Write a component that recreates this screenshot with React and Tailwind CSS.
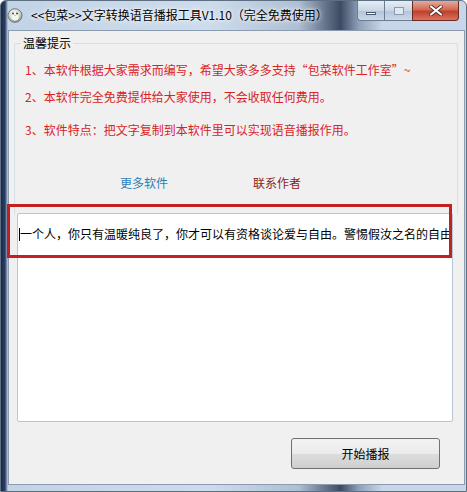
import React from 'react';

const FONT = { fontFamily: '"Noto Sans CJK SC", "Liberation Sans", sans-serif' };

function TitleIcon() {
    return (
        <svg width="16" height="16" viewBox="0 0 16 16" className="flex-shrink-0">
            <defs>
                <radialGradient id="ig" cx="0.45" cy="0.35" r="0.7">
                    <stop offset="0" stopColor="#ffffff" />
                    <stop offset="0.6" stopColor="#c9d2c8" />
                    <stop offset="1" stopColor="#6f7d72" />
                </radialGradient>
            </defs>
            <ellipse cx="8" cy="8.5" rx="7" ry="6.8" fill="url(#ig)" stroke="#5c6a60" strokeWidth="0.8" />
            <ellipse cx="8" cy="10" rx="3.6" ry="3.4" fill="#f4f6f0" />
            <circle cx="6" cy="6.5" r="0.9" fill="#333" />
            <circle cx="10" cy="6.5" r="0.9" fill="#333" />
            <path d="M7 8 L9 8 L8 9.2 Z" fill="#d9a13a" />
        </svg>
    );
}

function WindowButtons() {
    return (
        <div className="flex self-start h-[20px]">
            <div className="w-[27px] h-full rounded-bl-[4px] border border-r-0 border-t-0 border-[#6c7c93] flex items-center justify-center"
                style={{ background: 'linear-gradient(#e6eef7, #c9d6e5 50%, #b3c4d8 51%, #cbd8e8)' }}>
                <div className="w-[10px] h-[3px] bg-white border border-[#4a5a70] mt-[5px]" />
            </div>
            <div className="w-[28px] h-full border border-r-0 border-t-0 border-[#6c7c93] flex items-center justify-center"
                style={{ background: 'linear-gradient(#e6eef7, #c9d6e5 50%, #b3c4d8 51%, #cbd8e8)' }}>
                <div className="w-[10px] h-[8px] border border-[#8b9bb0] bg-[#dfe7f1]" />
            </div>
            <div className="w-[47px] h-full rounded-br-[4px] border border-t-0 border-[#6b2a22] flex items-center justify-center"
                style={{ background: 'linear-gradient(#e9a99a, #d26a55 45%, #c0412b 55%, #d9735d)' }}>
                <svg width="14" height="11" viewBox="0 0 14 11">
                    <path d="M2 1.5 L12 9.5 M12 1.5 L2 9.5" stroke="#4a2a24" strokeWidth="3.6" strokeLinecap="round" />
                    <path d="M2 1.5 L12 9.5 M12 1.5 L2 9.5" stroke="#ffffff" strokeWidth="2.2" strokeLinecap="round" />
                </svg>
            </div>
        </div>
    );
}

export default function App() {
    return (
        <div className="w-[467px] h-[492px] flex flex-col overflow-hidden rounded-t-[6px] border border-[#5f6f82]"
            style={{ ...FONT, background: 'linear-gradient(90deg, #1b2a4a 0px, #2b3d63 4px, #c3d3e6 7px, #cddcec 45%, #aebfd4 64%, #3e4a62 73%, #8fa2ba 77%, #c7d6e8 82%, #c7d6e8 100%)' }}>

            {/* Title bar */}
            <div className="h-[29px] flex items-start pl-[6px] pr-[7px]">
                <div className="flex items-center gap-[8px] pt-[6px] flex-1 min-w-0">
                    <TitleIcon />
                    <span className="text-[12px] leading-[16px] text-black whitespace-nowrap"
                        style={{ textShadow: '0 0 6px #ffffff, 0 0 3px #ffffff' }}>
                        &lt;&lt;包菜&gt;&gt;文字转换语音播报工具V1.10（完全免费使用）
                    </span>
                </div>
                <WindowButtons />
            </div>

            {/* Body with frame sides */}
            <div className="flex-1 flex px-[7px] pb-[6px]">
                <div className="flex-1 bg-[#f0f0f0] border border-[#8c9cb0] relative flex flex-col">

                    {/* Group box */}
                    <div className="relative mt-[12px] ml-[5px] mr-[6px] border border-b-0 border-[#d5dfe5] rounded-t-[3px] pt-[18px] pl-[10px] h-[172px]">
                        <span className="absolute -top-[9px] left-[6px] px-[2px] bg-[#f0f0f0] text-[12px] leading-[16px] text-black">温馨提示</span>
                        <div className="flex flex-col text-[12px] leading-[16px] text-[#d9231f]">
                            <p>1、本软件根据大家需求而编写，希望大家多多支持“包菜软件工作室”~</p>
                            <p className="mt-[11px]">2、本软件完全免费提供给大家使用，不会收取任何费用。</p>
                            <p className="mt-[17px]">3、软件特点：把文字复制到本软件里可以实现语音播报作用。</p>
                        </div>
                        <div className="flex text-[12px] leading-[16px] mt-[37px] pl-[95px] gap-[85px]">
                            <span className="text-[#2d7fb4]">更多软件</span>
                            <span className="text-[#8b1f1f]">联系作者</span>
                        </div>
                    </div>

                    {/* Text area */}
                    <div className="ml-[8px] mr-[11px] -mt-[2px] h-[209px] bg-white border border-[#b9c7d5] rounded-[2px] overflow-hidden">
                        <p className="text-[12px] leading-[16px] text-black whitespace-nowrap pt-[12px] pl-[1px]">
                            <span className="inline-block w-px h-[13px] bg-black align-middle -mt-[2px]" />一个人，你只有温暖纯良了，你才可以有资格谈论爱与自由。警惕假汝之名的自由
                        </p>
                    </div>

                    {/* Highlight annotation */}
                    <div className="absolute left-[-2px] top-[173px] w-[445px] h-[54px] border-[3px] border-[#c4201f] pointer-events-none" />

                    {/* Button */}
                    <div className="flex justify-end mt-[16px] mr-[24px]">
                        <button className="w-[149px] h-[31px] border border-[#707070] rounded-[3px] text-[12px] text-black"
                            style={{ ...FONT, background: 'linear-gradient(#f2f2f2, #ebebeb 50%, #dddddd 51%, #cfcfcf)' }}>
                            开始播报
                        </button>
                    </div>
                </div>
            </div>
        </div>
    );
}
